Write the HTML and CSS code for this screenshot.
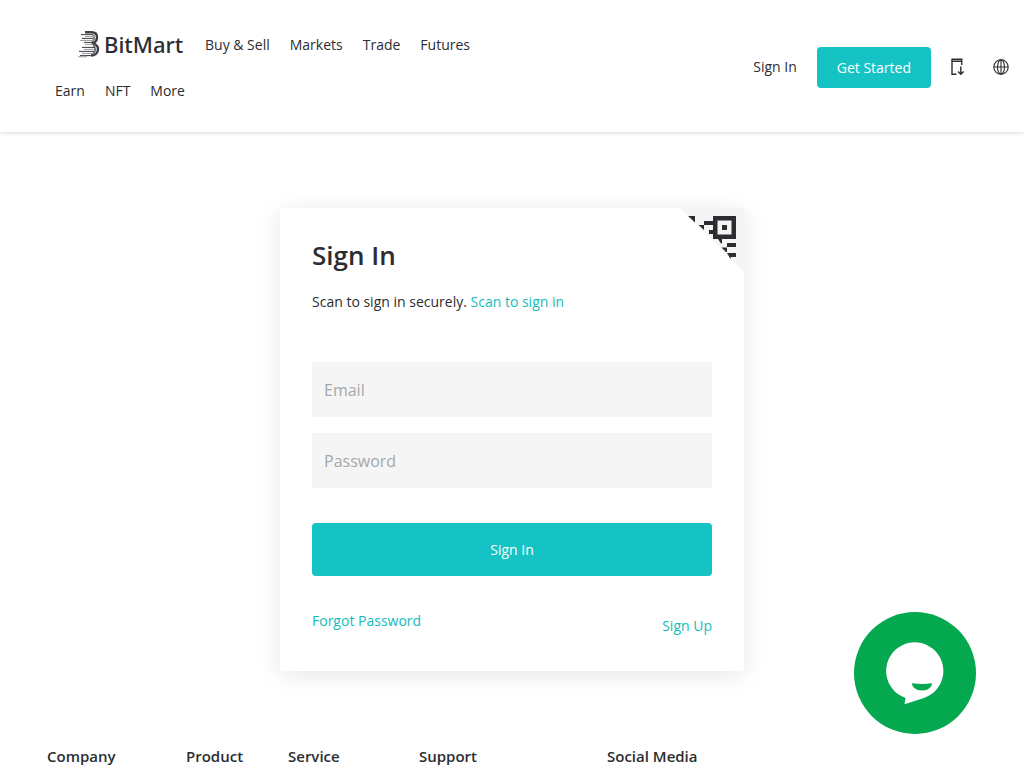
FILE: index.html
```
<!DOCTYPE html>
<html lang="en">
<head>
    <meta charset="UTF-8">
    <meta name="viewport" content="width=device-width, initial-scale=1.0">
    <title>Sign In | BitMart</title>
    <link rel="stylesheet" href="styles.css">
</head>
<body>
    <header class="header">
        <nav class="nav">
            <a href="#" class="logo">
                <svg class="logo-mark" viewBox="0 0 22 28" fill="none" stroke="#3c3e42">
                    <path d="M7 2.200h6.500c3.500 0 5.500 2 5.500 5s-1.500 5.300-5 6c4 1 6 3 6 6 0 4-3 6.300-7 6.300" stroke-width="2.400"/>
                    <path d="M15 5c2 2 1 5-1 7M15 15c3 2 3 6 0 9" stroke="#77797c" stroke-width="2"/>
                    <path d="M3 4.600h12M4 8.400h11M6 12.400h9M4 17.400h13M1 21.400h15M2 25.600h11" stroke-width="1"/>
                    <path d="M7 6.500h10M2 10.400h14M7 14.400h8M6 19.400h11M4 23.400h11M0 26.800h9" stroke-width="1" stroke="#97999c"/>
                </svg>
                <span>BitMart</span>
            </a>
            <a href="#" class="nav-link">Buy &amp; Sell</a>
            <a href="#" class="nav-link">Markets</a>
            <a href="#" class="nav-link">Trade</a>
            <a href="#" class="nav-link">Futures</a>
            <a href="#" class="nav-link">Earn</a>
            <a href="#" class="nav-link">NFT</a>
            <a href="#" class="nav-link">More</a>
        </nav>
        <div class="header-actions">
            <a href="#">Sign In</a>
            <a href="#" class="get-started">Get Started</a>
            <button class="icon-button" type="button" aria-label="Download app">
                <svg width="14" height="18" viewBox="0 0 14 18" fill="none" stroke="#2b2d31" stroke-width="1.4">
                    <path d="M5.500 16.300H1V1.200h9.700V7M1 3.300h9.700"/>
                    <path d="M9.800 8.500v7.800M7 13.400l2.800 2.800 2.800-2.800"/>
                </svg>
            </button>
            <button class="icon-button language" type="button" aria-label="Language">
                <svg width="16" height="16" viewBox="0 0 16 16" fill="none" stroke="#2b2d31" stroke-width="1.1">
                    <circle cx="8" cy="8" r="7.200"/>
                    <ellipse cx="8" cy="8" rx="3.500" ry="7.200"/>
                    <path d="M8 .8v14.400M.8 8h14.400"/>
                </svg>
            </button>
        </div>
    </header>

    <main class="card">
        <!-- Switch to QR code sign in -->
        <button class="qr-corner" type="button" aria-label="QR code sign in">
            <svg width="64" height="64" viewBox="0 0 64 64">
                <path d="M0 0h64v64z" fill="#f5f5f5"/>
                <g fill="#2b2d31">
                    <path fill-rule="evenodd" d="M33 8h23v23H33zM37.500 12.500v14h14v-14z"/>
                    <path d="M42 17h5v5h-5z"/>
                    <path d="M8 8h7v6.500zM24 13h9v4h-9zM18.500 17H24v5zM29 22h4v4h-4zM38 31h4v4.500h-1z"/>
                    <path d="M47 35h9v4h-9zM41.500 39.500H47v4.500h-1zM47 45h9v4h-5l-.5 2z"/>
                </g>
            </svg>
        </button>

        <h1>Sign In</h1>
        <p class="hint">Scan to sign in securely. <a href="#">Scan to sign in</a></p>

        <form>
            <input class="input-field" type="email" placeholder="Email" aria-label="Email">
            <input class="input-field" type="password" placeholder="Password" aria-label="Password">
            <button class="submit-button" type="submit">Sign In</button>
        </form>

        <div class="card-links">
            <a href="#">Forgot Password</a>
            <a href="#" class="sign-up">Sign Up</a>
        </div>
    </main>

    <footer class="footer">
        <h2>Company</h2>
        <h2>Product</h2>
        <h2>Service</h2>
        <h2>Support</h2>
        <h2>Social Media</h2>
    </footer>

    <!-- Floating support chat -->
    <button class="chat-button" type="button" aria-label="Open chat">
        <svg width="122" height="122" viewBox="0 0 122 122">
            <circle cx="61" cy="61" r="61" fill="#04a84e"/>
            <path d="M51.500 86A28.600 28.600 0 1 1 70 86L50.500 92.300z" fill="#fff"/>
            <path d="M58 71.200q10 1.600 20 0c0 4-4 7.200-10 7.200s-10-3.200-10-7.200z" fill="#04a84e"/>
        </svg>
    </button>
</body>
</html>
```
FILE: styles.css
```
* {
    box-sizing: border-box;
}

body {
    margin: 0;
    background: #fff;
    color: #2b2d31;
    font-family: 'Open Sans', sans-serif;
    font-size: 14px;
    line-height: 20px;
}

a {
    color: inherit;
    text-decoration: none;
}

button {
    padding: 0;
    border: none;
    background: none;
    font-family: inherit;
    cursor: pointer;
}

svg {
    display: block;
}

.header {
    display: flex;
    justify-content: space-between;
    align-items: center;
    box-shadow: 0 1px 4px rgba(0, 0, 0, 0.15);
}

.nav {
    display: flex;
    flex-wrap: wrap;
    width: 50%;
    padding: 22px 0 18px 45px;
}

.nav-link {
    padding: 0 10px;
    line-height: 46px;
}

.logo {
    display: flex;
    align-items: center;
    gap: 4px;
    width: 106px;
    height: 43px;
    margin-left: 33px;
    margin-right: 11px;
    font-family: 'Noto Sans', sans-serif;
    font-size: 22px;
    font-weight: 500;
}

.logo-mark {
    flex: none;
    width: 22px;
    height: 28px;
}

.header-actions {
    display: flex;
    align-items: center;
    gap: 20px;
    padding-top: 2px;
    padding-right: 15px;
}

.get-started {
    padding: 11px 20px 10px;
    border-radius: 4px;
    background: #15c3c5;
    color: #fff;
}

.language {
    margin-left: 8px;
}

.card {
    position: relative;
    width: 464px;
    max-width: 100%;
    margin: 76px auto 0;
    padding: 32px 32px 35px;
    border-radius: 4px;
    background: #fff;
    box-shadow: 0 4px 24px rgba(0, 0, 0, 0.1);
}

/* Sits over the top right corner of the card */
.qr-corner {
    position: absolute;
    top: 0;
    right: 0;
}

h1 {
    margin: 0 0 22px;
    font-size: 26px;
    font-weight: 600;
    line-height: 30px;
}

.hint {
    margin: 0 0 50px;
}

.hint a,
.card-links a {
    color: #12bdbb;
}

.input-field {
    display: block;
    width: 100%;
    height: 55px;
    margin-bottom: 16px;
    padding: 0 12px;
    border: none;
    background: #f5f5f5;
    color: #2b2d31;
    font-family: inherit;
    font-size: 16px;
}

.input-field::placeholder {
    color: #a6a8aa;
}

.submit-button {
    width: 100%;
    height: 53px;
    margin-top: 19px;
    border-radius: 4px;
    background: #15c3c5;
    color: #fff;
    font-size: 14px;
}

.card-links {
    display: flex;
    justify-content: space-between;
    padding-top: 35px;
}

.sign-up {
    padding-top: 5px;
}

.footer {
    display: grid;
    grid-template-columns: 139fr 102fr 131fr 188fr 370fr;
    margin-top: 73px;
    padding: 0 47px;
}

h2 {
    margin: 0;
    font-size: 15px;
    font-weight: 600;
    line-height: 24px;
}

.chat-button {
    position: fixed;
    right: 48px;
    bottom: 34px;
    border-radius: 50%;
}
```
